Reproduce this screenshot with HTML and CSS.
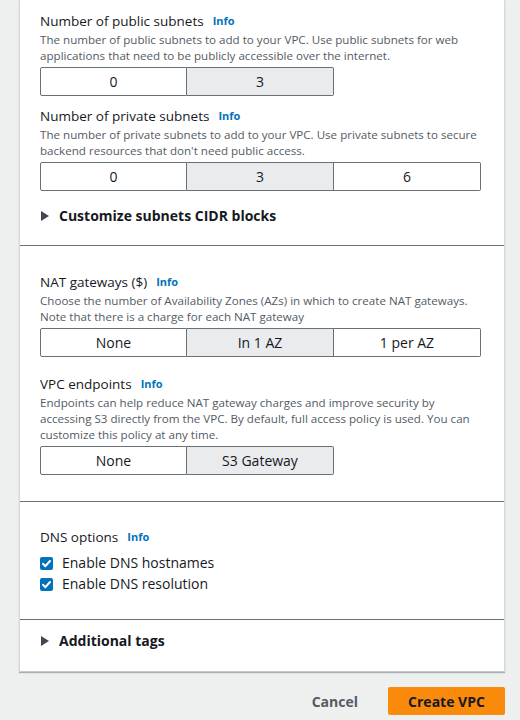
FILE: index.html
```html
<!DOCTYPE html>
<html>
<head>
<meta charset="utf-8">
<link rel="stylesheet" href="styles.css">
</head>
<body>
<div class="page">
  <div class="card">
    <section class="section s1">
      <div class="field">
        <div class="label">Number of public subnets <a class="info">Info</a></div>
        <p class="desc">The number of public subnets to add to your VPC. Use public subnets for web applications that need to be publicly accessible over the internet.</p>
        <div class="seg">
          <button class="opt">0</button>
          <button class="opt sel">3</button>
        </div>
      </div>
      <div class="field f2">
        <div class="label">Number of private subnets <a class="info">Info</a></div>
        <p class="desc">The number of private subnets to add to your VPC. Use private subnets to secure backend resources that don't need public access.</p>
        <div class="seg">
          <button class="opt">0</button>
          <button class="opt sel">3</button>
          <button class="opt">6</button>
        </div>
      </div>
      <div class="expand e1"><span class="tri"></span>Customize subnets CIDR blocks</div>
    </section>
    <section class="section s2">
      <div class="field">
        <div class="label">NAT gateways ($) <a class="info">Info</a></div>
        <p class="desc">Choose the number of Availability Zones (AZs) in which to create NAT gateways. Note that there is a charge for each NAT gateway</p>
        <div class="seg">
          <button class="opt">None</button>
          <button class="opt sel">In 1 AZ</button>
          <button class="opt">1 per AZ</button>
        </div>
      </div>
      <div class="field f2">
        <div class="label">VPC endpoints <a class="info">Info</a></div>
        <p class="desc">Endpoints can help reduce NAT gateway charges and improve security by accessing S3 directly from the VPC. By default, full access policy is used. You can customize this policy at any time.</p>
        <div class="seg">
          <button class="opt">None</button>
          <button class="opt sel">S3 Gateway</button>
        </div>
      </div>
    </section>
    <section class="section s3">
      <div class="label">DNS options <a class="info">Info</a></div>
      <label class="check"><span class="box"><svg width="13" height="13" viewBox="0 0 13 13"><path d="M3 6.8 L5.4 9.2 L10 4" fill="none" stroke="#fff" stroke-width="2" stroke-linecap="round" stroke-linejoin="round"/></svg></span>Enable DNS hostnames</label>
      <label class="check"><span class="box"><svg width="13" height="13" viewBox="0 0 13 13"><path d="M3 6.8 L5.4 9.2 L10 4" fill="none" stroke="#fff" stroke-width="2" stroke-linecap="round" stroke-linejoin="round"/></svg></span>Enable DNS resolution</label>
    </section>
    <section class="section s4">
      <div class="expand"><span class="tri"></span>Additional tags</div>
    </section>
  </div>
  <div class="actions">
    <button class="cancel">Cancel</button>
    <button class="primary">Create VPC</button>
  </div>
</div>
</body>
</html>
```
FILE: styles.css
```css
* { box-sizing: border-box; }
html, body { margin: 0; padding: 0; }
body {
  background: #eef0f0;
  font-family: "Open Sans", "Noto Sans", sans-serif;
  color: #16191f;
  width: 520px;
  height: 720px;
  overflow: hidden;
}
.page {
  padding-left: 19px;
  width: 505px;
}
.card {
  background: #fff;
  border-left: 1px solid #d5dbdb;
  border-right: 1px solid #d5dbdb;
  border-bottom: 1px solid #c6cbcd;
  box-shadow: 0 1px 1px rgba(0,28,36,0.3);
}
.section {
  padding: 0 21px 0 20px;
  border-bottom: 1px solid #687078;
}
.section:last-child { border-bottom: none; }
.s1 { height: 246px; padding-top: 11px; }
.s2 { height: 256px; padding-top: 26px; }
.s3 { height: 118px; padding-top: 25px; }
.s4 { height: 51px; padding-top: 11px; }
.label {
  font-size: 13.5px;
  line-height: 20px;
  display: flex;
  align-items: center;
}
.info {
  color: #0073bb;
  font-weight: 700;
  font-size: 11px;
  margin-left: 9px;
}
.desc {
  margin: 1px 0 3px;
  font-size: 11.6px;
  line-height: 16px;
  color: #545b64;
}
.s1 .f2 { margin-top: 10px; }
.s2 .f2 { margin-top: 17px; }
.seg {
  display: flex;
}
.opt {
  width: 147px;
  height: 29px;
  border: 1px solid #687078;
  background: #fff;
  font-family: inherit;
  font-size: 14px;
  color: #16191f;
  padding: 0;
  margin: 0;
}
.opt + .opt { border-left: none; }
.opt:first-child { border-radius: 2px 0 0 2px; }
.opt:last-child { border-radius: 0 2px 2px 0; }
.opt.sel { background: #e9ebed; }
.expand {
  font-size: 14px;
  font-weight: 700;
  color: #16191f;
  display: flex;
  align-items: center;
  line-height: 20px;
}
.e1 { margin-top: 15px; }
.tri {
  width: 0; height: 0;
  border-top: 5px solid transparent;
  border-bottom: 5px solid transparent;
  border-left: 8px solid #414750;
  margin: 0 10px 0 1px;
}
.check {
  display: flex;
  align-items: center;
  font-size: 14px;
  line-height: 20px;
  margin-top: 1px;
}
.s3 .label { margin-bottom: 6px; }
.box {
  width: 13px; height: 13px;
  background: #0073bb;
  border-radius: 2px;
  margin-right: 9px;
  display: inline-flex;
}
.actions {
  display: flex;
  justify-content: flex-end;
  align-items: center;
  gap: 30px;
  margin-top: 15px;
}
.cancel {
  background: none;
  border: none;
  font-family: inherit;
  font-weight: 700;
  font-size: 14px;
  color: #545b64;
  padding: 0;
}
.primary {
  width: 117px;
  height: 28px;
  background: #f98a0c;
  border: none;
  border-radius: 2px;
  font-family: inherit;
  font-weight: 700;
  font-size: 14px;
  color: #16191f;
}
```
